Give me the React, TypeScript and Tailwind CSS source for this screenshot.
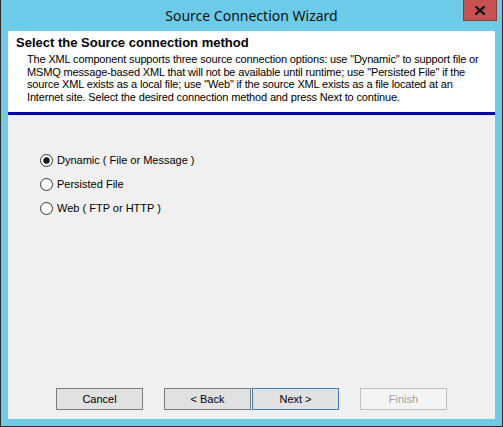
import React from "react";

function Radio({ checked, label }: { checked?: boolean; label: string }) {
  return (
    <div className="flex items-center h-[13px]">
      <svg width="13" height="13" viewBox="0 0 13 13" className="shrink-0">
        <circle cx="6.5" cy="6.5" r="6" fill="#ffffff" stroke="#333333" strokeWidth="1" />
        {checked && <circle cx="6.5" cy="6.5" r="3.2" fill="#1a1a1a" />}
      </svg>
      <span className="ml-[4px] text-[11px] leading-[13px] text-black">{label}</span>
    </div>
  );
}

function Btn({ label, variant }: { label: string; variant?: "default" | "primary" | "disabled" }) {
  const cls =
    variant === "primary"
      ? "bg-[#e1e1e1] border-[#3c7fb1] text-black"
      : variant === "disabled"
      ? "bg-[#f4f4f4] border-[#bfbfbf] text-[#a0a0a0]"
      : "bg-[#e1e1e1] border-[#7a7a7a] text-black";
  return (
    <div className={`w-[87px] h-[22px] border flex items-center justify-center text-[11px] ${cls}`}>
      {label}
    </div>
  );
}

export default function App() {
  return (
    <div
      className="w-[503px] h-[427px] bg-[#6ccbe9] border-l border-r border-b border-[#2b2b2b] flex flex-col"
      style={{ fontFamily: '"Liberation Sans", Arial, sans-serif' }}
    >
      <div className="h-[31px] relative flex items-center justify-center shrink-0">
        <span
          className="text-[14px] text-[#111]"
          style={{ fontFamily: '"Noto Sans", "Open Sans", sans-serif' }}
        >
          Source Connection Wizard
        </span>
        <div className="absolute right-[5px] top-0 w-[34px] h-[21px] bg-[#c75050] border border-[#8e3b3b] border-t-0 flex items-center justify-center">
          <svg width="10" height="9" viewBox="0 0 10 9">
            <path d="M1 1 L9 8 M9 1 L1 8" stroke="#000" strokeWidth="2.2" strokeLinecap="square" />
          </svg>
        </div>
      </div>
      <div className="mx-[7px] h-[388px] bg-[#f0f0f0] flex flex-col">
        <div className="bg-white h-[81px] shrink-0 pl-[8px] pt-[4px]">
          <div className="text-[13px] font-bold leading-[16px] text-black">
            Select the Source connection method
          </div>
          <div className="pl-[11px] mt-[2px] text-[11px] leading-[12.7px] text-black whitespace-nowrap tracking-[-0.15px]">
            The XML component supports three source connection options: use "Dynamic" to support file or
            <br />
            MSMQ message-based XML that will not be available until runtime; use "Persisted File" if the
            <br />
            source XML exists as a local file; use "Web" if the source XML exists as a file located at an
            <br />
            Internet site. Select the desired connection method and press Next to continue.
          </div>
        </div>
        <div className="h-[3px] bg-[#0000c4] shrink-0" />
        <div className="flex-1 flex flex-col">
          <div className="pl-[32px] pt-[39px] flex flex-col gap-[11px]">
            <Radio checked label="Dynamic ( File or Message )" />
            <Radio label="Persisted File" />
            <Radio label="Web ( FTP or HTTP )" />
          </div>
          <div className="flex-1" />
          <div className="flex justify-center pb-[9px]">
            <Btn label="Cancel" />
            <div className="w-[21px]" />
            <Btn label="< Back" />
            <div className="w-[1px]" />
            <Btn label="Next >" variant="primary" />
            <div className="w-[21px]" />
            <Btn label="Finish" variant="disabled" />
          </div>
        </div>
      </div>
    </div>
  );
}
